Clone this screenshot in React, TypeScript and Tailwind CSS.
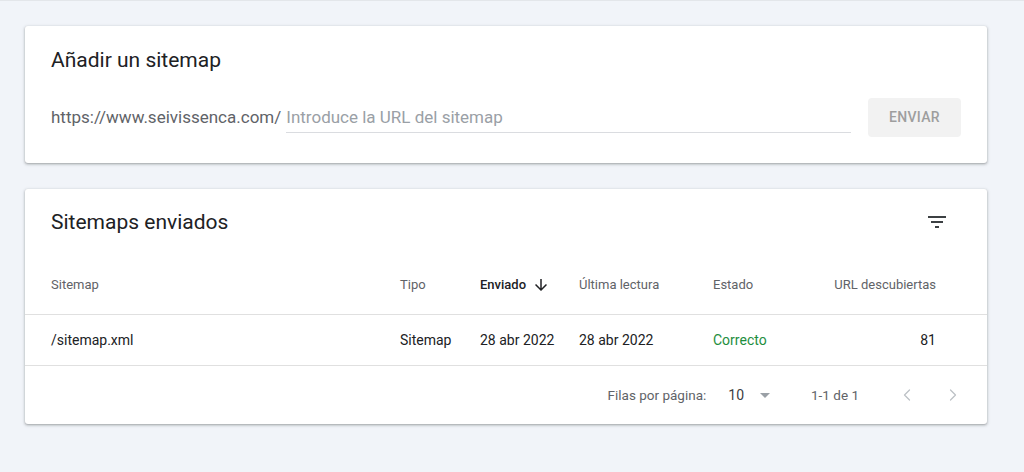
import { ChevronLeft, ChevronRight } from "lucide-react";

const CARD =
  "ml-[25px] w-[962px] rounded-[3px] bg-white shadow-[0_1px_2px_0_rgba(60,64,67,0.3),0_1px_3px_1px_rgba(60,64,67,0.15)]";

const COLS = "grid grid-cols-[349px_80px_99px_134px_1fr_auto] items-center pl-[26px] pr-[51px]";

function FilterIcon() {
  return (
    <svg viewBox="0 0 24 24" className="h-6 w-6 fill-[#3c4043]">
      <path d="M10 18h4v-2h-4v2zM3 6v2h18V6H3zm3 7h12v-2H6v2z" />
    </svg>
  );
}

function ArrowDown() {
  return (
    <svg viewBox="0 0 24 24" className="h-[18px] w-[18px] fill-[#202124]">
      <path d="M20 12l-1.41-1.41L13 16.17V4h-2v12.17l-5.58-5.59L4 12l8 8 8-8z" />
    </svg>
  );
}

function DropDown() {
  return (
    <svg viewBox="0 0 24 24" className="h-6 w-6 fill-[#9aa0a6]">
      <path d="M7 10l5 5 5-5z" />
    </svg>
  );
}

export default function App() {
  return (
    <div className="min-h-[472px] border-t border-[#e3e6ea] bg-[#f1f4f9] pt-[25px] font-['Roboto','Liberation_Sans',sans-serif]">
      <section className={CARD}>
        <div className="px-[26px] pt-[20px] pb-[26px]">
          <h2 className="text-[21px] leading-[28px] text-[#202124]">Añadir un sitemap</h2>
          <div className="mt-[24px] flex h-[39px] items-center">
            <span className="text-[17px] text-[#5f6368]">https://www.seivissenca.com/</span>
            <div className="ml-[5px] flex h-[30px] flex-1 items-center border-b border-[#dadce0]">
              <input
                placeholder="Introduce la URL del sitemap"
                className="w-full bg-transparent pt-[1px] text-[17px] text-[#202124] outline-none placeholder:text-[#9aa0a6]"
              />
            </div>
            <button className="ml-[17px] h-[39px] w-[93px] rounded-[4px] bg-[#f2f2f2] text-[14px] font-medium tracking-[0.3px] text-[#9e9e9e]">
              ENVIAR
            </button>
          </div>
        </div>
      </section>

      <section className={`${CARD} mt-[26px]`}>
        <div className="flex h-[66px] items-center justify-between pl-[26px] pr-[38px]">
          <h2 className="text-[21px] leading-[28px] text-[#202124]">Sitemaps enviados</h2>
          <FilterIcon />
        </div>

        <div className={`${COLS} h-[60px] border-b border-[#e0e0e0] text-[13px] text-[#5f6368]`}>
          <span>Sitemap</span>
          <span>Tipo</span>
          <span className="flex items-center gap-[6px] font-medium text-[#202124]">
            Enviado <ArrowDown />
          </span>
          <span>Última lectura</span>
          <span>Estado</span>
          <span className="text-right">URL descubiertas</span>
        </div>

        <div className={`${COLS} h-[51px] border-b border-[#e0e0e0] text-[14px] text-[#202124]`}>
          <span>/sitemap.xml</span>
          <span>Sitemap</span>
          <span>28 abr 2022</span>
          <span>28 abr 2022</span>
          <span className="text-[#1e8e3e]">Correcto</span>
          <span className="text-right">81</span>
        </div>

        <div className="flex h-[58px] items-center justify-end pr-[24px] text-[13.5px] text-[#5f6368]">
          <span>Filas por página:</span>
          <span className="ml-[22px] text-[14px] text-[#3c4043]">10</span>
          <span className="ml-[9px]">
            <DropDown />
          </span>
          <span className="ml-[34px]">1-1 de 1</span>
          <ChevronLeft className="ml-[38px] h-5 w-5 text-[#bdc1c6]" strokeWidth={1.5} />
          <ChevronRight className="ml-[26px] h-5 w-5 text-[#bdc1c6]" strokeWidth={1.5} />
        </div>
      </section>
    </div>
  );
}
